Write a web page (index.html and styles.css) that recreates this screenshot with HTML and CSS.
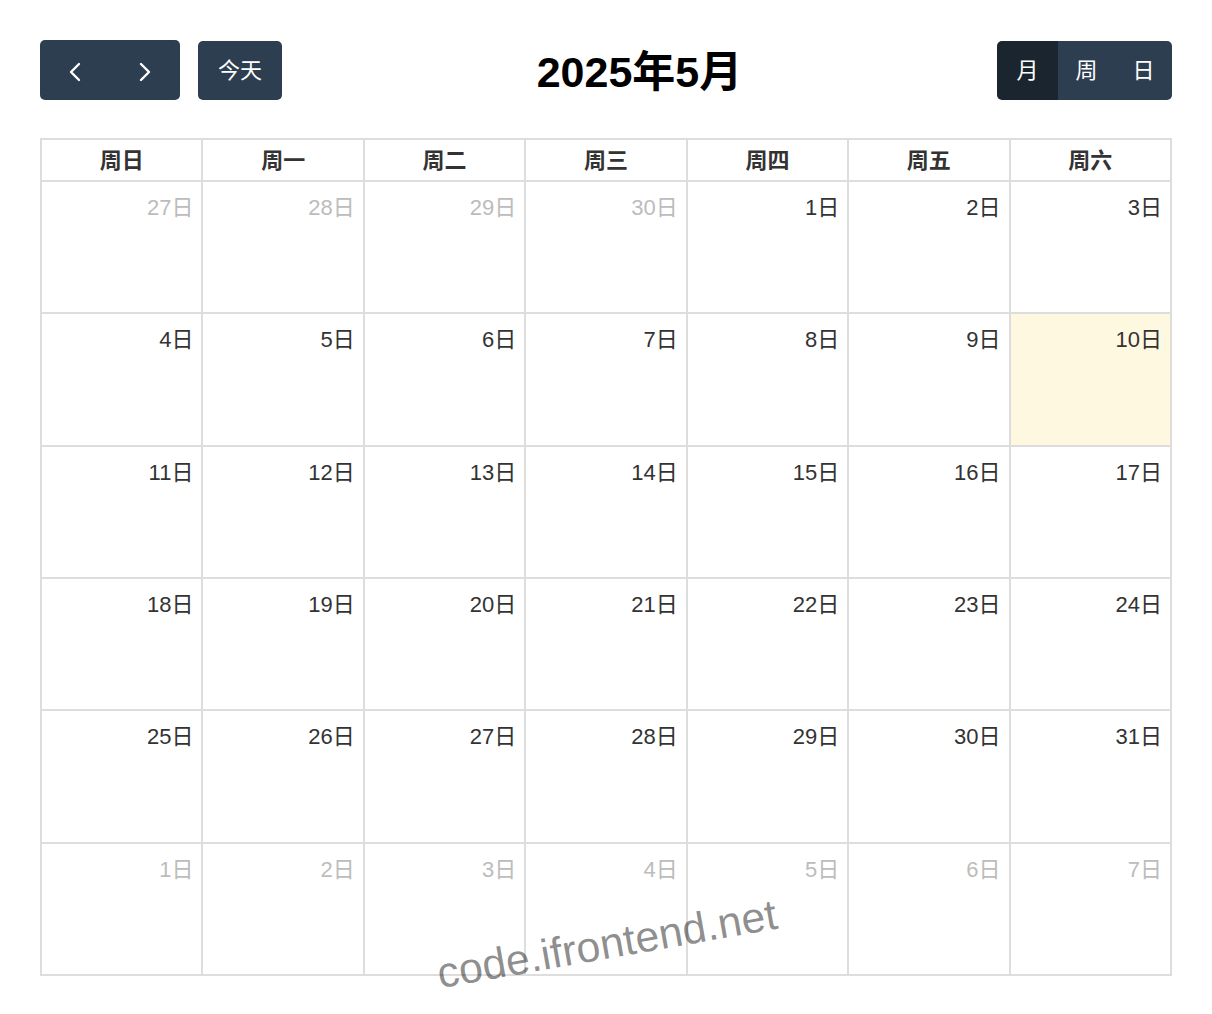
FILE: index.html
```html
<!DOCTYPE html>
<html lang="zh-CN">
<head>
<meta charset="utf-8">
<title>日历</title>
<link rel="stylesheet" href="styles.css">
</head>
<body>
<div class="page">
  <div class="toolbar">
    <div class="toolbar-left">
      <div class="btn-group">
        <button class="btn nav" aria-label="上一月"><svg class="chev" width="14" height="20" viewBox="0 0 14 20"><polyline points="11,2 3,10 11,18" fill="none" stroke="#fff" stroke-width="2.4" stroke-linecap="round" stroke-linejoin="round"/></svg></button>
        <button class="btn nav" aria-label="下一月"><svg class="chev" width="14" height="20" viewBox="0 0 14 20"><polyline points="3,2 11,10 3,18" fill="none" stroke="#fff" stroke-width="2.4" stroke-linecap="round" stroke-linejoin="round"/></svg></button>
      </div>
      <button class="btn today">今天</button>
    </div>
    <h2 class="title">2025年5月</h2>
    <div class="btn-group">
      <button class="btn view active">月</button>
      <button class="btn view">周</button>
      <button class="btn view">日</button>
    </div>
  </div>

  <div class="cal">
    <div class="hd">周日</div><div class="hd">周一</div><div class="hd">周二</div><div class="hd">周三</div><div class="hd">周四</div><div class="hd">周五</div><div class="hd">周六</div>

    <div class="day other">27日</div><div class="day other">28日</div><div class="day other">29日</div><div class="day other">30日</div><div class="day">1日</div><div class="day">2日</div><div class="day">3日</div>

    <div class="day">4日</div><div class="day">5日</div><div class="day">6日</div><div class="day">7日</div><div class="day">8日</div><div class="day">9日</div><div class="day today-cell">10日</div>

    <div class="day">11日</div><div class="day">12日</div><div class="day">13日</div><div class="day">14日</div><div class="day">15日</div><div class="day">16日</div><div class="day">17日</div>

    <div class="day">18日</div><div class="day">19日</div><div class="day">20日</div><div class="day">21日</div><div class="day">22日</div><div class="day">23日</div><div class="day">24日</div>

    <div class="day">25日</div><div class="day">26日</div><div class="day">27日</div><div class="day">28日</div><div class="day">29日</div><div class="day">30日</div><div class="day">31日</div>

    <div class="day other">1日</div><div class="day other">2日</div><div class="day other">3日</div><div class="day other">4日</div><div class="day other">5日</div><div class="day other">6日</div><div class="day other">7日</div>
  </div>

  <div class="watermark">code.ifrontend.net</div>
</div>
</body>
</html>
```

FILE: styles.css
```css
* { box-sizing: border-box; }

html, body {
  margin: 0;
  padding: 0;
  background: #fff;
}

body {
  font-family: "Liberation Sans", "Noto Sans CJK SC", sans-serif;
  color: #333;
}

.page {
  position: relative;
  width: 1212px;
  height: 1014px;
  padding: 40px 40px 0 40px;
  overflow: hidden;
}

.toolbar {
  display: flex;
  justify-content: space-between;
  align-items: center;
  height: 60px;
  margin-bottom: 38px;
}

.toolbar-left {
  display: flex;
  align-items: center;
  gap: 18px;
}

.btn-group {
  display: flex;
}

.btn {
  font-family: "Liberation Sans", "Noto Sans CJK SC", sans-serif;
  font-size: 22px;
  line-height: 33px;
  height: 60px;
  color: #fff;
  background: #2c3e50;
  border: 0;
  border-radius: 5px;
  padding: 0 20px;
  display: flex;
  align-items: center;
  justify-content: center;
  cursor: pointer;
}

.btn-group .btn { border-radius: 0; }
.btn-group .btn:first-child { border-radius: 5px 0 0 5px; }
.btn-group .btn:last-child { border-radius: 0 5px 5px 0; }

.btn.nav {
  width: 70px;
  padding: 3px 0 0 0;
}

.btn.today {
  width: 84px;
  height: 59px;
  padding: 0;
}

.btn.view {
  width: 57px;
  height: 59px;
  padding: 0;
}

.btn.view.active {
  width: 61px;
  background: #1a252f;
}

.title {
  margin: 0;
  padding-top: 5px;
  font-size: 43px;
  font-weight: 700;
  color: #000;
  line-height: 1.2;
}

.cal {
  display: grid;
  grid-template-columns: repeat(7, 1fr);
  grid-template-rows: 40px repeat(6, 1fr);
  gap: 2px;
  padding: 2px;
  background: #dddddd;
  width: 1132px;
  height: 838px;
}

.hd {
  background: #fff;
  display: flex;
  align-items: center;
  justify-content: center;
  padding-bottom: 4px;
  font-size: 22px;
  font-weight: 700;
  color: #333;
}

.day {
  background: #fff;
  text-align: right;
  font-size: 22px;
  line-height: 30px;
  padding: 11px 8px 0 0;
  color: #333;
}

.day.other {
  color: #bcbcbc;
}

.day.today-cell {
  background: #fff8e1;
}

.watermark {
  position: absolute;
  left: 607px;
  top: 944px;
  transform: translate(-50%, -50%) rotate(-10deg);
  font-family: "Liberation Sans", sans-serif;
  font-size: 43px;
  color: rgba(0, 0, 0, 0.45);
  white-space: nowrap;
  pointer-events: none;
}
```
